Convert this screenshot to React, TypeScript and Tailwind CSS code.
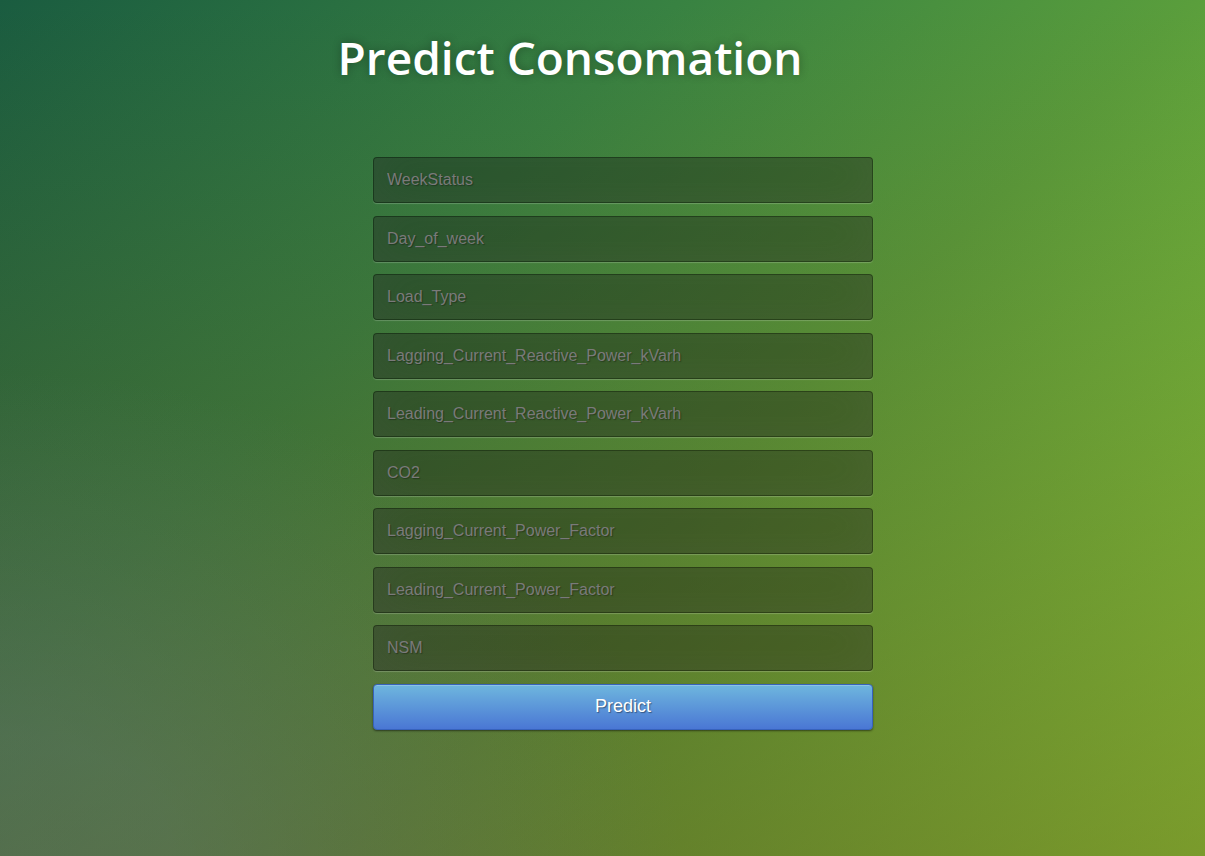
const fields = [
  'WeekStatus',
  'Day_of_week',
  'Load_Type',
  'Lagging_Current_Reactive_Power_kVarh',
  'Leading_Current_Reactive_Power_kVarh',
  'CO2',
  'Lagging_Current_Power_Factor',
  'Leading_Current_Power_Factor',
  'NSM',
]

export default function App() {
  return (
    <div className="min-h-[856px] w-full bg-[radial-gradient(ellipse_at_0%_100%,rgba(104,128,138,0.35)_10%,rgba(104,128,138,0)_40%),linear-gradient(to_bottom,rgba(80,45,15,0)_0%,rgba(80,45,15,0.4)_100%),linear-gradient(135deg,#1a5c40_0%,#388242_33%,#5a9e3c_58%,#96e43f_100%)]">
      <h1 className="pt-[23px] pr-[65px] text-center font-['Open_Sans',sans-serif] text-[46px] leading-[69px] font-semibold text-white [text-shadow:0_0_10px_rgba(0,0,0,0.3)]">
        Predict Consomation
      </h1>
      <form className="ml-[373px] mt-[65px] flex w-[500px] flex-col gap-[12.5px]">
        {fields.map((f) => (
          <input
            key={f}
            type="text"
            name={f}
            placeholder={f}
            className="h-[46px] w-full rounded-[4px] border border-[rgba(0,0,0,0.3)] bg-[rgba(0,0,0,0.3)] px-[13px] font-['Liberation_Sans',Arial,sans-serif] text-[16px] text-white outline-none shadow-[inset_0_-5px_45px_rgba(100,100,100,0.2),0_1px_1px_rgba(255,255,255,0.2)] [text-shadow:1px_1px_1px_rgba(0,0,0,0.3)] placeholder:text-[#7a7a7a]"
          />
        ))}
        <button
          type="submit"
          className="h-[46px] w-full rounded-[4px] border border-[#3762bc] bg-[linear-gradient(to_bottom,#6eb6de,#4a77d4)] font-['Liberation_Sans',Arial,sans-serif] text-[18px] text-white shadow-[inset_0_1px_0_rgba(255,255,255,0.2),0_1px_2px_rgba(0,0,0,0.5)] [text-shadow:1px_1px_1px_rgba(0,0,0,0.4)]"
        >
          Predict
        </button>
      </form>
    </div>
  )
}
